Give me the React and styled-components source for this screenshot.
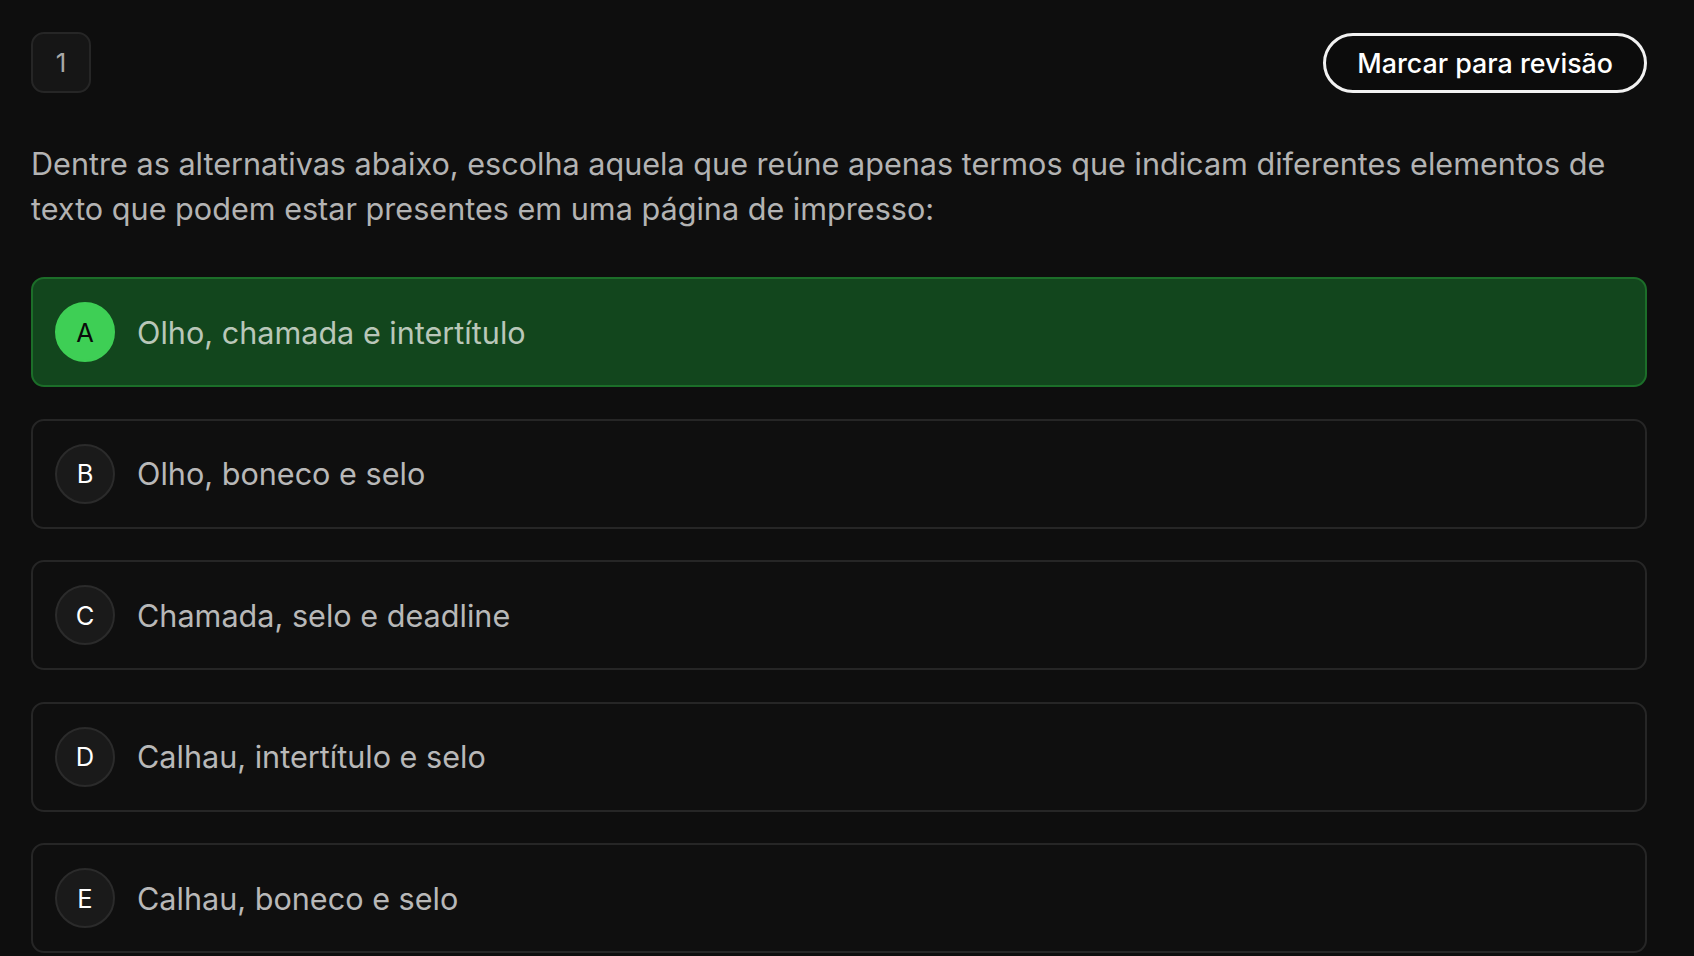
import React from "react";
import styled, { createGlobalStyle } from "styled-components";

const GlobalStyle = createGlobalStyle`
  html, body {
    margin: 0;
    padding: 0;
    background: #0e0e0e;
  }
  body {
    font-family: Inter, "Noto Sans", "Liberation Sans", sans-serif;
    overflow: hidden;
  }
`;

const Page = styled.main`
  min-height: 100vh;
  box-sizing: border-box;
  padding: 32px 47px 0 31px;
  background: #0e0e0e;
`;

const Header = styled.header`
  display: flex;
  align-items: center;
  justify-content: space-between;
`;

const NumberBadge = styled.div`
  width: 60px;
  height: 61px;
  box-sizing: border-box;
  display: flex;
  align-items: center;
  justify-content: center;
  border: 2px solid #262626;
  border-radius: 13px;
  background: #161616;
  color: #a8a8a8;
  font-size: 26px;
`;

const ReviewButton = styled.button`
  height: 60px;
  box-sizing: border-box;
  padding: 0 31px;
  border: 3px solid #f2f2f2;
  border-radius: 30px;
  background: #0c0c0c;
  color: #ffffff;
  font-family: inherit;
  font-size: 26.8px;
  font-weight: 500;
  cursor: pointer;
`;

const Question = styled.p`
  margin: 48px 0 46px;
  color: #b3b3b3;
  font-size: 30.6px;
  line-height: 45px;
`;

const Options = styled.div`
  display: grid;
  gap: 31.5px;
`;

const Option = styled.div`
  height: 110px;
  box-sizing: border-box;
  display: flex;
  align-items: center;
  gap: 22px;
  padding: 0 22px;
  border: 2px solid ${(p) => (p.$selected ? "#1c6e29" : "#262626")};
  border-radius: 13px;
  background: ${(p) => (p.$selected ? "#12461d" : "#0f0f0f")};
  cursor: pointer;
`;

const Letter = styled.span`
  width: 60px;
  height: 60px;
  flex: none;
  box-sizing: border-box;
  display: flex;
  align-items: center;
  justify-content: center;
  border-radius: 50%;
  border: 2px solid ${(p) => (p.$selected ? "#3ecf55" : "#2b2b2b")};
  background: ${(p) => (p.$selected ? "#3ecf55" : "#1a1a1a")};
  color: ${(p) => (p.$selected ? "#0a0a0a" : "#ffffff")};
  font-size: 25.5px;
`;

const OptionText = styled.span`
  color: ${(p) => (p.$selected ? "#b9c7b9" : "#b8b8b8")};
  font-size: 30.6px;
`;

const options = [
  { key: "A", text: "Olho, chamada e intertítulo" },
  { key: "B", text: "Olho, boneco e selo" },
  { key: "C", text: "Chamada, selo e deadline" },
  { key: "D", text: "Calhau, intertítulo e selo" },
  { key: "E", text: "Calhau, boneco e selo" },
];

export default function App() {
  const [selected, setSelected] = React.useState("A");

  return (
    <>
      <GlobalStyle />
      <Page>
        <Header>
          <NumberBadge>1</NumberBadge>
          <ReviewButton>Marcar para revisão</ReviewButton>
        </Header>
        <Question>
          Dentre as alternativas abaixo, escolha aquela que reúne apenas termos que
          indicam diferentes elementos de texto que podem estar presentes em uma
          página de impresso:
        </Question>
        <Options>
          {options.map((o) => (
            <Option
              key={o.key}
              $selected={selected === o.key}
              onClick={() => setSelected(o.key)}
            >
              <Letter $selected={selected === o.key}>{o.key}</Letter>
              <OptionText $selected={selected === o.key}>{o.text}</OptionText>
            </Option>
          ))}
        </Options>
      </Page>
    </>
  );
}
